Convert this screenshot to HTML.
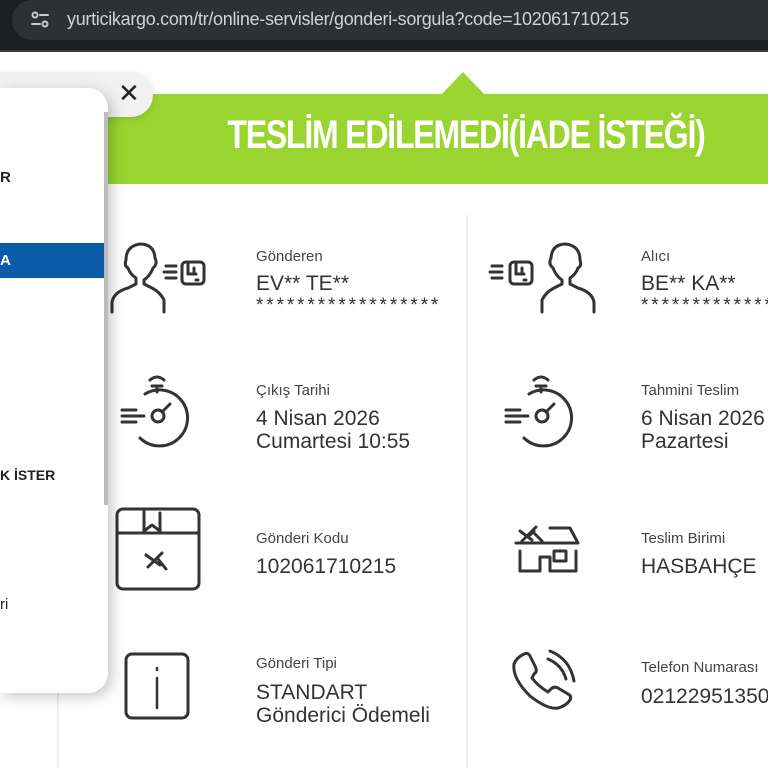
<!DOCTYPE html>
<html><head><meta charset="utf-8"><style>
*{margin:0;padding:0;box-sizing:border-box}
html,body{width:768px;height:768px;overflow:hidden}
body{background:#fff;font-family:"Liberation Sans","DejaVu Sans",sans-serif;position:relative;color:#333}
.bar{position:absolute;left:0;top:0;width:768px;height:52px;background:#1c1e1f;border-bottom:2px solid #3a3d3e;overflow:hidden}
.pill{position:absolute;left:12px;top:0px;width:776px;height:40px;background:#2e3133;border-radius:20px}
.url{position:absolute;left:67px;top:9px;font-size:18px;color:#d0d2d3;letter-spacing:-0.3px;white-space:nowrap}
.green{position:absolute;left:108px;top:94px;width:660px;height:90px;background:#9ad431}
.notch{position:absolute;left:441px;top:72px;width:0;height:0;border-left:22px solid transparent;border-right:22px solid transparent;border-bottom:23px solid #9ad431}
.title{position:absolute;left:166px;top:113px;width:600px;text-align:center;color:#fff;font-weight:bold;font-size:40px;letter-spacing:-1.5px;white-space:nowrap;transform:scaleX(0.8);transform-origin:center}
.vline{position:absolute;left:466px;top:215px;width:2px;height:553px;background:#eee}
.vline2{position:absolute;left:57px;top:690px;width:2px;height:78px;background:#eee}
.tab{position:absolute;left:0;top:72px;width:153px;height:45px;background:#f1f1f1;border-radius:0 22px 22px 0;box-shadow:0 2px 8px rgba(0,0,0,.12)}
.x{position:absolute;left:118px;top:78px;font-size:26px;color:#222}
.panel{position:absolute;left:0;top:88px;width:108px;height:605px;background:#fff;border-radius:0 20px 20px 0;box-shadow:4px 4px 14px rgba(0,0,0,.22)}
.scroll{position:absolute;left:104px;top:112px;width:4px;height:393px;background:#bcbcbc}
.blue{position:absolute;left:0;top:243px;width:104px;height:35px;background:#0b5ca8}
.m{position:absolute;font-size:15px;font-weight:bold;color:#222}
.lab{position:absolute;font-size:15px;color:#444;white-space:nowrap}
.val{position:absolute;font-size:21px;color:#333;line-height:23px;white-space:nowrap}
.ast{position:absolute;font-size:19px;letter-spacing:2.9px;color:#333;white-space:nowrap}
.rc{position:absolute;left:641px;top:0;width:127px;height:768px;overflow:hidden}
.rc>div{left:0}
svg{position:absolute;fill:none;stroke:#333;stroke-width:3;stroke-linecap:round;stroke-linejoin:round}
</style></head><body>
<div class="bar"><div class="pill"></div>
<svg style="left:30px;top:11px" width="20" height="18" viewBox="0 0 20 18"><g stroke="#c8cacb" stroke-width="2"><circle cx="5" cy="4" r="2.5"/><line x1="10" y1="4" x2="18" y2="4"/><line x1="2" y1="13" x2="10" y2="13"/><circle cx="15" cy="13" r="2.5"/></g></svg>
<div class="url">yurticikargo.com/tr/online-servisler/gonderi-sorgula?code=102061710215</div></div>
<div class="notch"></div>
<div class="green"></div>
<div class="title">TESLİM EDİLEMEDİ(İADE İSTEĞİ)</div>
<div class="vline"></div><div class="vline2"></div>

<svg style="left:106px;top:242px" width="104" height="72" viewBox="0 0 104 72"><path d="M6 70V60Q8 50 22 46L30 42V36Q24 32 22 26Q18 24 20 18Q20 4 34 2Q48 2 49 16Q52 22 47 26Q44 34 38 38V42L46 46Q54 50 58 58V70"/><path d="M60 24h10M58 30h12M60 36h10"/><rect x="76" y="20" width="22" height="22" rx="4"/><path d="M82 22v10h8M88 26v6M90 38h2"/></svg>
<svg style="left:118px;top:372px" width="80" height="80" viewBox="0 0 80 80" stroke-width="3.5"><path d="M27 22A28 28 0 1 1 22 66"/><path d="M34 14h10M39 14v6M32 8q7-6 14 0"/><circle cx="40" cy="44" r="6"/><path d="M44 40l8-8M4 38h14M4 44h22M4 50h14"/></svg>
<svg style="left:114px;top:507px" width="88" height="86" viewBox="0 0 88 86"><rect x="3" y="2" width="82" height="80" rx="6"/><path d="M3 26h82M30 2v22l8-6 8 6V6"/><path d="M32 48l14 10M34 60l14-14M38 56l6-6M44 52l8 10"/></svg>
<svg style="left:124px;top:652px" width="66" height="68" viewBox="0 0 66 68"><rect x="2" y="2" width="62" height="64" rx="6"/><path d="M33 16v2M33 26v30" stroke-width="2.5"/></svg>

<svg style="left:488px;top:242px" width="112" height="72" viewBox="0 0 112 72"><path d="M106 70V60Q104 50 90 46L82 42V36Q88 32 90 26Q94 24 92 18Q92 4 78 2Q64 2 63 16Q60 22 65 26Q68 34 74 38V42L66 46Q58 50 54 58V70"/><path d="M4 24h10M2 30h12M4 36h10"/><rect x="22" y="20" width="22" height="22" rx="4"/><path d="M28 22v10h8M34 26v6M36 38h2"/></svg>
<svg style="left:502px;top:372px" width="80" height="80" viewBox="0 0 80 80" stroke-width="3.5"><path d="M27 22A28 28 0 1 1 22 66"/><path d="M34 14h10M39 14v6M32 8q7-6 14 0"/><circle cx="40" cy="44" r="6"/><path d="M44 40l8-8M4 38h14M4 44h22M4 50h14"/></svg>
<svg style="left:512px;top:515px" width="68" height="62" viewBox="0 0 68 62"><path d="M4 28h62L58 13H38"/><path d="M8 16l12 9M10 26l14-14M18 20l4-4M22 18l8 8"/><path d="M8 36v20h20V42h10v14h26V36"/><rect x="42" y="36" width="12" height="10"/></svg>
<svg style="left:508px;top:648px" width="70" height="64" viewBox="0 0 70 64"><path d="M16 6Q8 10 6 16Q4 30 22 48Q40 62 50 60Q58 58 62 52Q64 48 60 46L50 40Q46 38 43 41L40 44Q30 38 24 30L26 26Q30 24 27 18L22 8Q20 4 16 6Z"/><path d="M40 8Q54 14 58 28M42 0Q62 8 66 30" transform="translate(0,3)"/></svg>

<div class="lab" style="left:256px;top:248px">Gönderen</div>
<div class="val" style="left:256px;top:272px">EV** TE**</div>
<div class="ast" style="left:256px;top:295px">******************</div>
<div class="lab" style="left:256px;top:382px">Çıkış Tarihi</div>
<div class="val" style="left:256px;top:407px">4 Nisan 2026<br>Cumartesi 10:55</div>
<div class="lab" style="left:256px;top:530px">Gönderi Kodu</div>
<div class="val" style="left:256px;top:555px">102061710215</div>
<div class="lab" style="left:256px;top:655px">Gönderi Tipi</div>
<div class="val" style="left:256px;top:681px">STANDART<br>Gönderici Ödemeli</div>

<div class="rc">
<div class="lab" style="top:248px">Alıcı</div>
<div class="val" style="top:272px">BE** KA**</div>
<div class="ast" style="top:295px">******************</div>
<div class="lab" style="top:382px">Tahmini Teslim</div>
<div class="val" style="top:407px">6 Nisan 2026<br>Pazartesi</div>
<div class="lab" style="top:530px">Teslim Birimi</div>
<div class="val" style="top:555px">HASBAHÇE</div>
<div class="lab" style="top:659px">Telefon Numarası</div>
<div class="val" style="top:685px">02122951350</div>
</div>

<div class="tab"></div>
<div class="x">✕</div>
<div class="panel"></div>
<div class="scroll"></div>
<div class="blue"></div>
<div class="m" style="left:0;top:169px">R</div>
<div class="m" style="left:0;top:252px;color:#fff">A</div>
<div class="m" style="left:0;top:467px;font-size:14px">K İSTER</div>
<div class="m" style="left:0;top:596px;font-weight:normal">ri</div>
</body></html>
